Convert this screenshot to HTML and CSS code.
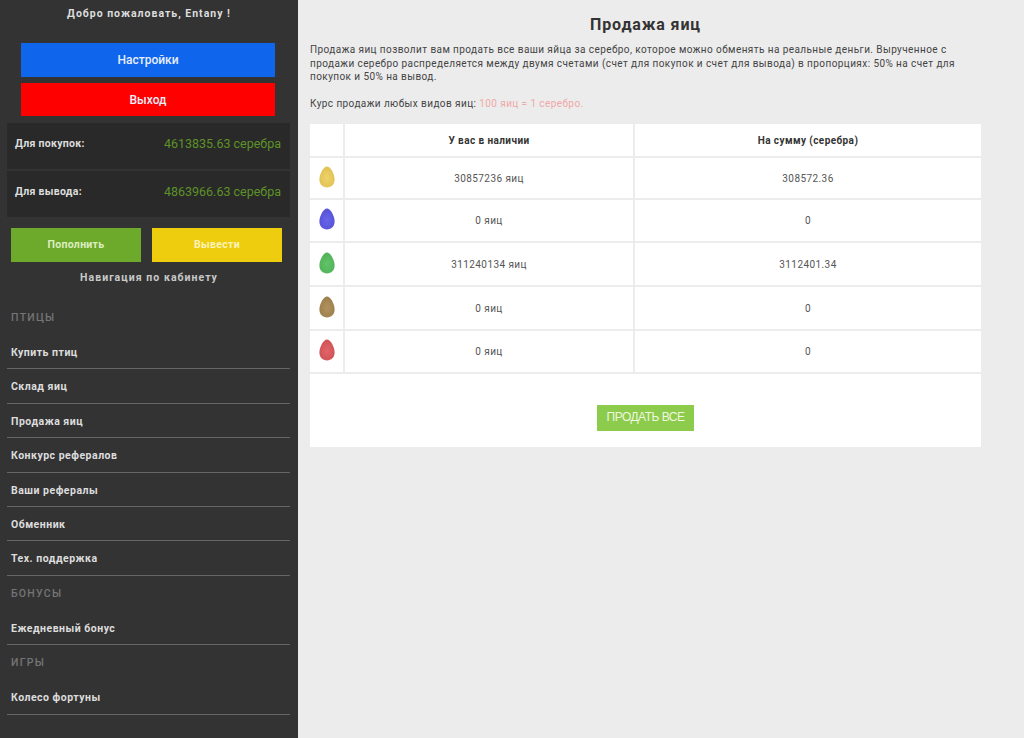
FILE: index.html
```html
<!DOCTYPE html>
<html lang="ru">
<head>
    <meta charset="UTF-8">
    <meta name="viewport" content="width=device-width, initial-scale=1.0">
    <title>Продажа яиц</title>
    <link rel="stylesheet" href="styles.css">
</head>
<body>
    <svg class="defs" width="0" height="0">
        <defs>
            <radialGradient id="g-yellow" cx=".5" cy=".55" r=".6"><stop offset="0" stop-color="#efd26a"/><stop offset="1" stop-color="#dfc050"/></radialGradient>
            <radialGradient id="g-blue" cx=".5" cy=".55" r=".6"><stop offset="0" stop-color="#6a66ec"/><stop offset="1" stop-color="#5450d4"/></radialGradient>
            <radialGradient id="g-green" cx=".5" cy=".55" r=".6"><stop offset="0" stop-color="#62c468"/><stop offset="1" stop-color="#4fb057"/></radialGradient>
            <radialGradient id="g-brown" cx=".5" cy=".55" r=".6"><stop offset="0" stop-color="#b09360"/><stop offset="1" stop-color="#9a7c48"/></radialGradient>
            <radialGradient id="g-red" cx=".5" cy=".55" r=".6"><stop offset="0" stop-color="#e26468"/><stop offset="1" stop-color="#cc5054"/></radialGradient>
        </defs>
        <symbol id="egg" viewBox="0 0 16 22">
            <path d="M8 .5C11.4.5 15.6 7.8 15.6 13.6 15.6 18.6 12.2 21.5 8 21.5S.4 18.6.4 13.6C.4 7.8 4.6.5 8 .5Z"/>
        </symbol>
    </svg>

    <div class="page">
        <aside class="sidebar">
            <div class="welcome">Добро пожаловать, Entany !</div>
            <a class="wide-btn blue" href="#">Настройки</a>
            <a class="wide-btn red" href="#">Выход</a>

            <div class="balance">
                <span class="balance-label">Для покупок:</span>
                <span class="balance-value">4613835.63 серебра</span>
            </div>
            <div class="balance">
                <span class="balance-label">Для вывода:</span>
                <span class="balance-value">4863966.63 серебра</span>
            </div>

            <div class="money-btns">
                <a class="money-btn green" href="#">Пополнить</a>
                <a class="money-btn yellow" href="#">Вывести</a>
            </div>

            <div class="nav-title">Навигация по кабинету</div>

            <nav class="nav">
                <div class="nav-head first">Птицы</div>
                <a href="#">Купить птиц</a>
                <a href="#">Склад яиц</a>
                <a href="#">Продажа яиц</a>
                <a href="#">Конкурс рефералов</a>
                <a href="#">Ваши рефералы</a>
                <a href="#">Обменник</a>
                <a href="#">Тех. поддержка</a>
                <div class="nav-head">Бонусы</div>
                <a href="#">Ежедневный бонус</a>
                <div class="nav-head">Игры</div>
                <a href="#">Колесо фортуны</a>
            </nav>
        </aside>

        <main class="content">
            <h1>Продажа яиц</h1>
            <p class="intro">Продажа яиц позволит вам продать все ваши яйца за серебро, которое можно обменять на реальные деньги. Вырученное с продажи серебро распределяется между двумя счетами (счет для покупок и счет для вывода) в пропорциях: 50% на счет для покупок и 50% на вывод.</p>
            <p class="rate">Курс продажи любых видов яиц: <span class="rate-value">100 яиц = 1 серебро.</span></p>

            <table class="eggs">
                <thead>
                    <tr>
                        <th class="egg-col"></th>
                        <th class="have-col">У вас в наличии</th>
                        <th>На сумму (серебра)</th>
                    </tr>
                </thead>
                <tbody>
                    <tr class="r1">
                        <td><svg class="egg egg-yellow"><use href="#egg"/></svg></td>
                        <td>30857236 яиц</td>
                        <td>308572.36</td>
                    </tr>
                    <tr class="r2">
                        <td><svg class="egg egg-blue"><use href="#egg"/></svg></td>
                        <td>0 яиц</td>
                        <td>0</td>
                    </tr>
                    <tr class="r3">
                        <td><svg class="egg egg-green"><use href="#egg"/></svg></td>
                        <td>311240134 яиц</td>
                        <td>3112401.34</td>
                    </tr>
                    <tr class="r3">
                        <td><svg class="egg egg-brown"><use href="#egg"/></svg></td>
                        <td>0 яиц</td>
                        <td>0</td>
                    </tr>
                    <tr class="r2">
                        <td><svg class="egg egg-red"><use href="#egg"/></svg></td>
                        <td>0 яиц</td>
                        <td>0</td>
                    </tr>
                </tbody>
            </table>

            <div class="sell-box">
                <a class="sell-btn" href="#">ПРОДАТЬ ВСЕ</a>
            </div>
        </main>
    </div>
</body>
</html>
```

FILE: styles.css
```css
* {
    box-sizing: border-box;
}
html, body {
    height: 100%;
}
body {
    margin: 0;
    font-family: Roboto, "Liberation Sans", sans-serif;
    background-color: #ececec;
    overflow: hidden;
}
a {
    text-decoration: none;
}
.defs {
    position: absolute;
}
.page {
    display: flex;
    height: 738px;
}

/* sidebar */
.sidebar {
    width: 298px;
    flex-shrink: 0;
    padding-top: 7px;
    background-color: #333;
}
.welcome {
    height: 14px;
    font-size: 10.5px;
    font-weight: 700;
    line-height: 14px;
    letter-spacing: 1px;
    text-align: center;
    color: #ddd;
}
.wide-btn {
    display: block;
    width: 254px;
    height: 34px;
    margin: 6px 0 0 21px;
    font-size: 12px;
    font-weight: 500;
    line-height: 34px;
    text-align: center;
    color: #e8eefc;
}
.wide-btn.blue {
    margin-top: 22px;
    background-color: #0f66ec;
}
.wide-btn.red {
    height: 33px;
    line-height: 35px;
    background-color: #fe0000;
}
.balance {
    display: flex;
    justify-content: space-between;
    width: 283px;
    height: 46px;
    margin: 2px 0 0 7px;
    padding: 14px 9px 0 8px;
    background-color: #292929;
}
.wide-btn.red + .balance {
    margin-top: 7px;
}
.balance-label {
    font-size: 10.5px;
    font-weight: 700;
    line-height: 14px;
    letter-spacing: .3px;
    color: #ddd;
}
.balance-value {
    font-size: 12.5px;
    line-height: 14px;
    color: #5e9228;
}
.money-btns {
    display: flex;
    gap: 11px;
    margin: 11px 0 0 11px;
}
.money-btn {
    width: 130px;
    height: 34px;
    font-size: 10.5px;
    font-weight: 700;
    line-height: 33px;
    letter-spacing: .3px;
    text-align: center;
}
.money-btn.green {
    background-color: #6da92a;
    color: #dceec0;
}
.money-btn.yellow {
    background-color: #eecd0e;
    color: #fbf3b8;
}
.nav-title {
    height: 14px;
    margin-top: 9px;
    font-size: 10.5px;
    font-weight: 700;
    line-height: 14px;
    letter-spacing: 1.05px;
    text-align: center;
    color: #c9c9c9;
}
.nav {
    width: 283px;
    margin-left: 7px;
}
.nav-head {
    height: 35px;
    padding: 11px 0 0 4px;
    font-size: 10.5px;
    font-weight: 500;
    line-height: 14px;
    letter-spacing: 1.25px;
    text-transform: uppercase;
    color: #757575;
}
.nav-head.first {
    height: 34px;
    margin-top: 16px;
    padding-top: 10px;
}
.nav a {
    display: block;
    height: 34.4px;
    padding: 11px 0 0 4px;
    border-bottom: 1px solid #666;
    font-size: 10.5px;
    font-weight: 700;
    line-height: 14px;
    letter-spacing: .5px;
    color: #ddd;
}

/* main part */
.content {
    width: 671px;
    margin-left: 12px;
}
h1 {
    margin: 15px 0 0;
    font-size: 16px;
    font-weight: 700;
    line-height: 20px;
    letter-spacing: .85px;
    text-align: center;
    color: #333;
}
.intro, .rate {
    font-size: 10px;
    line-height: 13.5px;
    letter-spacing: .42px;
    color: #444;
}
.intro {
    margin: 8px 0 0;
}
.rate {
    margin: 13px 0 0;
}
.rate-value {
    color: #f0a8a8;
}
.eggs {
    width: 671px;
    margin-top: 14px;
    border-collapse: collapse;
    table-layout: fixed;
    background-color: #fff;
}
.eggs th, .eggs td {
    padding: 0;
    border: 2px solid #ececec;
    font-size: 10px;
    letter-spacing: .42px;
    text-align: center;
    color: #555;
}
.eggs tr > :first-child {
    border-left: 0;
}
.eggs tr > :last-child {
    border-right: 0;
}
.eggs thead th {
    height: 33px;
    border-top: 0;
    font-weight: 700;
    color: #333;
}
.egg-col {
    width: 34px;
}
.have-col {
    width: 290px;
}
.r1 td {
    height: 42px;
}
.r2 td {
    height: 43px;
}
.r3 td {
    height: 44px;
}
.eggs td:first-child {
    text-align: left;
    padding-left: 9px;
}
.egg {
    display: block;
    width: 16px;
    height: 22px;
    margin-bottom: 3px;
}
.egg-yellow {
    fill: url(#g-yellow);
}
.egg-blue {
    fill: url(#g-blue);
}
.egg-green {
    fill: url(#g-green);
}
.egg-brown {
    fill: url(#g-brown);
}
.egg-red {
    fill: url(#g-red);
}
.sell-box {
    height: 73px;
    padding-top: 31px;
    background-color: #fff;
    text-align: center;
}
.sell-btn {
    display: inline-block;
    width: 97px;
    height: 26px;
    font-family: "Liberation Sans", Arial, sans-serif;
    font-size: 12px;
    line-height: 25px;
    letter-spacing: -.5px;
    background-color: #8ccb4c;
    color: #eef7df;
}
```
